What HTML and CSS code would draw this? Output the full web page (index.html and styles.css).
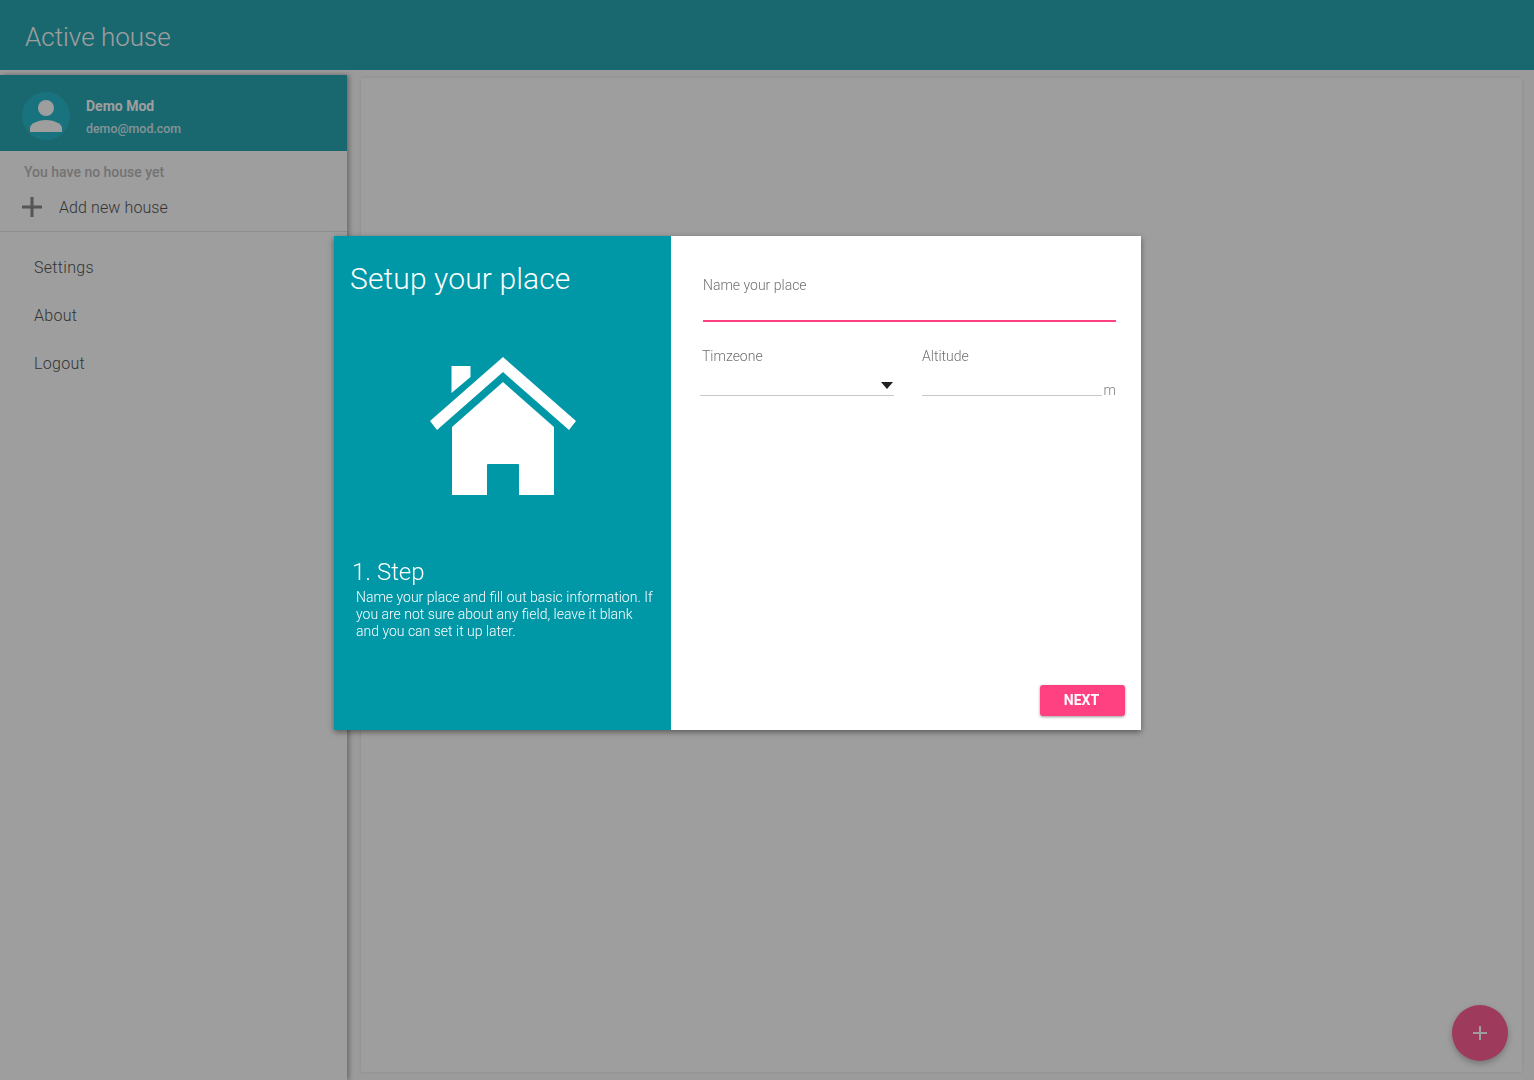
FILE: index.html
```html
<!DOCTYPE html>
<html lang="en">
<head>
  <meta charset="UTF-8" />
  <title>Active house</title>
  <link rel="stylesheet" href="styles.css">
</head>
<body>
  <header class="toolbar">
    <h1 class="toolbar-title">Active house</h1>
  </header>

  <div class="layout">
    <aside class="sidebar">
      <div class="user">
        <div class="avatar">
          <svg viewBox="0 0 48 48" width="48" height="48">
            <circle cx="24" cy="16" r="8" fill="#fff" />
            <path d="M8 40v-4c0-5 9.500-8 16-8s16 3 16 8v4z" fill="#fff" />
          </svg>
        </div>
        <div class="user-info">
          <div class="user-name">Demo Mod</div>
          <div class="user-mail">demo@mod.com</div>
        </div>
      </div>
      <div class="houses">
        <div class="houses-empty">You have no house yet</div>
        <div class="add-house">
          <svg class="add-icon" viewBox="0 0 20 20" width="20" height="20">
            <path d="M8.500 0h3v8.500H20v3h-8.500V20h-3v-8.500H0v-3h8.500z" fill="#757575" />
          </svg>
          <span>Add new house</span>
        </div>
      </div>
      <nav class="menu">
        <a class="menu-item">Settings</a>
        <a class="menu-item">About</a>
        <a class="menu-item">Logout</a>
      </nav>
    </aside>
    <main class="content"></main>
  </div>

  <button class="fab">
    <svg viewBox="0 0 14 14" width="14" height="14">
      <path d="M6 0h2v6h6v2H8v6H6V8H0V6h6z" fill="#fff" />
    </svg>
  </button>

  <div class="backdrop"></div>

  <div class="dialog">
    <section class="dialog-side">
      <h2 class="dialog-title">Setup your place</h2>
      <svg class="house-icon" viewBox="0 0 146 139" width="146" height="139">
        <path fill="#fff" d="M21.500 9H40.500V20L21.500 36z" />
        <path fill="#fff" d="M73 0 146 64 139 73 73 15 7 73 0 64z" />
        <path fill="#fff" d="M73 25 124 70V138H89V108Q89 107 88 107H58Q57 107 57 108V138H22V70z" />
      </svg>
      <h3 class="step-title">1. Step</h3>
      <p class="step-text">Name your place and fill out basic information. If you are not sure about any field, leave it blank and you can set it up later.</p>
    </section>
    <section class="dialog-form">
      <div class="field field-name">
        <label class="field-label">Name your place</label>
        <div class="field-line field-line-active"></div>
      </div>
      <div class="field-row">
        <div class="field field-zone">
          <label class="field-label">Timzeone</label>
          <div class="select-box"><span class="select-arrow"></span></div>
        </div>
        <div class="field field-alt">
          <label class="field-label">Altitude</label>
          <div class="alt-box">
            <div class="alt-input"></div>
            <span class="alt-unit">m</span>
          </div>
        </div>
      </div>
      <div class="dialog-actions">
        <button class="next-btn">NEXT</button>
      </div>
    </section>
  </div>
</body>
</html>
```

FILE: styles.css
```css
:root {
  --primary: #0097a7;
  --accent: #ff4081;
}

* {
  box-sizing: border-box;
}

body {
  margin: 0;
  height: 1080px;
  overflow: hidden;
  background-color: #fafafa;
  font-family: Roboto, "Liberation Sans", sans-serif;
  color: #212121;
}

.toolbar {
  height: 70px;
  display: flex;
  align-items: center;
  padding: 4px 0 0 25px;
  background-color: var(--primary);
}
.toolbar-title {
  margin: 0;
  font-size: 26px;
  font-weight: 300;
  color: #fff;
}

.layout {
  display: flex;
  height: 1010px;
}

.sidebar {
  width: 347px;
  margin-top: 5px;
  background-color: #fff;
  box-shadow: 2px 0 5px rgba(0, 0, 0, 0.4);
}

.user {
  height: 76px;
  display: flex;
  align-items: center;
  padding-left: 22px;
  background-color: var(--primary);
  color: #fff;
}
.avatar {
  width: 48px;
  height: 48px;
  margin-top: 5px;
  border-radius: 50%;
  overflow: hidden;
  background-color: #00acc1;
}
.user-info {
  margin: 10px 0 0 16px;
  font-size: 14px;
}
.user-name {
  font-weight: 700;
  line-height: 20px;
  margin-top: -2px;
}
.user-mail {
  font-size: 12.400px;
  font-weight: 500;
  line-height: 18px;
  margin-top: 4px;
  opacity: 0.8;
}

.houses {
  height: 81px;
  padding-top: 12px;
  border-bottom: 1px solid #e0e0e0;
}
.houses-empty {
  padding-left: 24px;
  font-size: 14px;
  font-weight: 500;
  line-height: 18px;
  color: #adadad;
}
.add-house {
  display: flex;
  align-items: center;
  margin-top: 16px;
  padding-left: 22px;
  font-size: 16px;
  font-weight: 300;
  letter-spacing: 0.1px;
  color: #333;
}
.add-icon {
  margin-right: 17px;
}

.menu {
  display: flex;
  flex-direction: column;
  padding: 12px 0 0 34px;
}
.menu-item {
  height: 48px;
  line-height: 48px;
  font-size: 16px;
  font-weight: 300;
  letter-spacing: 0.3px;
  color: #333;
}

.content {
  flex: 1;
  margin: 8px 12px 8px 14px;
  background-color: #fff;
  box-shadow: 0 0 3px rgba(0, 0, 0, 0.14);
}

.fab {
  position: fixed;
  right: 26px;
  bottom: 19px;
  width: 56px;
  height: 56px;
  padding: 0;
  border: none;
  border-radius: 50%;
  display: flex;
  align-items: center;
  justify-content: center;
  background-color: var(--accent);
  box-shadow: 0 3px 6px rgba(0, 0, 0, 0.3);
}

.backdrop {
  position: fixed;
  top: 0;
  left: 0;
  right: 0;
  bottom: 0;
  background-color: rgba(52, 52, 52, 0.478);
}

/* Setup dialog */
.dialog {
  position: fixed;
  top: 236px;
  left: 334px;
  width: 807px;
  height: 494px;
  display: flex;
  background-color: #fff;
  box-shadow: 0 2px 6px rgba(0, 0, 0, 0.45);
}

.dialog-side {
  width: 337px;
  display: flex;
  flex-direction: column;
  padding: 25px 16px 0 16px;
  background-color: var(--primary);
  color: #fff;
}
.dialog-title {
  margin: 0;
  font-size: 30px;
  font-weight: 300;
  letter-spacing: 0.12px;
  line-height: 36px;
}
.house-icon {
  align-self: center;
  margin: 60px 0 0 1px;
}
.step-title {
  margin: 62px 0 0 2px;
  font-size: 24px;
  font-weight: 300;
  line-height: 28px;
}
.step-text {
  margin: 3px 0 0 6px;
  font-size: 14px;
  font-weight: 300;
  line-height: 16.800px;
}

.dialog-form {
  flex: 1;
  display: flex;
  flex-direction: column;
  padding: 41px 25px 14px 29px;
}
.field-label {
  display: block;
  font-size: 14px;
  font-weight: 300;
  line-height: 17px;
  color: #707070;
}
.field-name {
  margin-left: 3px;
}
.field-line {
  margin-top: 26px;
  height: 2px;
}
.field-line-active {
  background-color: var(--accent);
}

.field-row {
  display: flex;
  margin-top: 26px;
}
.field-zone {
  width: 194px;
  margin-right: 28px;
}
.field-zone .field-label {
  margin-left: 2px;
}
.field-alt {
  flex: 1;
}
.select-box {
  position: relative;
  height: 31px;
  border-bottom: 1px solid #c8c8c8;
}
.select-arrow {
  position: absolute;
  right: 1px;
  top: 17px;
  border-style: solid;
  border-width: 7px 6px 0;
  border-color: #212121 transparent transparent;
}
.alt-box {
  display: flex;
  align-items: flex-end;
}
.alt-input {
  flex: 1;
  height: 31px;
  border-bottom: 1px solid #c8c8c8;
}
.alt-unit {
  margin: 0 0 -4px 2px;
  font-size: 14px;
  font-weight: 300;
  line-height: 19px;
  color: #808080;
}

.dialog-actions {
  margin-top: auto;
  display: flex;
  justify-content: flex-end;
  margin-right: -9px;
}
.next-btn {
  width: 85px;
  height: 31px;
  padding: 0 2px 1px 0;
  border: none;
  border-radius: 3px;
  font-family: inherit;
  font-size: 14px;
  font-weight: 700;
  color: #fff;
  background-color: var(--accent);
  box-shadow: 0 1px 3px rgba(0, 0, 0, 0.4);
}
```
